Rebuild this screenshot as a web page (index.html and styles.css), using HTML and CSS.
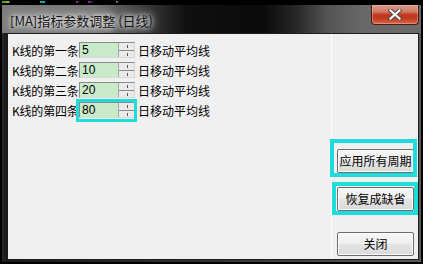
FILE: index.html
```html
<!DOCTYPE html>
<html lang="zh-CN">
<head>
<meta charset="utf-8">
<title>[MA]指标参数调整 (日线)</title>
<link rel="stylesheet" href="styles.css">
</head>
<body>
<div class="desk"></div>
<div class="window">
  <div class="titlebar">
    <span class="title">[MA]指标参数调整 (日线)</span>
    <div class="close">
      <svg width="14" height="11" viewBox="0 0 14 11">
        <path d="M2.5 1.5 L11.5 9.5 M11.5 1.5 L2.5 9.5" stroke="#4a4a4a" stroke-width="4.2" stroke-linecap="square" fill="none"/>
        <path d="M2.5 1.5 L11.5 9.5 M11.5 1.5 L2.5 9.5" stroke="#ffffff" stroke-width="2.2" stroke-linecap="square" fill="none"/>
      </svg>
    </div>
  </div>
  <div class="client">
    <div class="params">
      <div class="row"><span class="lbl">K线的第一条</span><div class="spin"><span class="val">5</span><span class="arrows"><i></i><i></i></span></div><span class="suffix">日移动平均线</span></div>
      <div class="row"><span class="lbl">K线的第二条</span><div class="spin"><span class="val">10</span><span class="arrows"><i></i><i></i></span></div><span class="suffix">日移动平均线</span></div>
      <div class="row"><span class="lbl">K线的第三条</span><div class="spin"><span class="val">20</span><span class="arrows"><i></i><i></i></span></div><span class="suffix">日移动平均线</span></div>
      <div class="row"><span class="lbl">K线的第四条</span><div class="spin"><span class="val">80</span><span class="arrows"><i></i><i></i></span></div><span class="suffix">日移动平均线</span></div>
    </div>
    <div class="actions">
      <button class="btn">应用所有周期</button>
      <button class="btn b2">恢复成缺省</button>
      <button class="btn b3">关闭</button>
    </div>
    <div class="mark m-input"></div>
    <div class="mark m-apply"></div>
    <div class="mark m-reset"></div>
  </div>
</div>
</body>
</html>
```
FILE: styles.css
```css
html, body {
  margin: 0;
  padding: 0;
}
body {
  width: 423px;
  height: 264px;
  overflow: hidden;
  background: #000;
  font-family: "Noto Sans CJK SC", "Liberation Sans", sans-serif;
}
.desk {
  height: 5px;
  background: linear-gradient(to right, #000 0, #000 2px, #4a9a2a 2px, #9ab02a 9px, #000 10px, #000 40px, #2aa0a8 40px, #2aa0a8 45px, #000 45px, #000 76px, #a030a8 76px, #000 80px, #000 88px, #a030a8 88px, #000 94px, #000 116px, #b0a030 116px, #000 119px, #000 100%);
  background-size: 100% 2px;
  background-repeat: no-repeat;
  background-position: 0 1px;
}
.window {
  margin-left: 2px;
  width: 419px;
  height: 257px;
  display: flex;
  flex-direction: column;
  background: linear-gradient(to right, #2a2a2a 0, #1a1a1a 4px, #333 50%, #5a5a5a 100%);
}
.titlebar {
  height: 28px;
  flex: none;
  display: flex;
  align-items: flex-start;
  background: linear-gradient(to right, #7c7c7c 0%, #747474 22%, #3a3a3a 34%, #101010 44%, #0a0a0a 62%, #262626 70%, #555 78%, #686868 86%, #6b6b6b 100%);
}
.title {
  margin-top: 8px;
  padding-left: 8px;
  line-height: 16px;
  font-size: 13px;
  color: #141414;
  white-space: nowrap;
  text-shadow: 0 0 4px #fff, 0 0 8px rgba(255,255,255,0.9), 0 0 14px rgba(255,255,255,0.7);
}
.close {
  margin-left: auto;
  margin-right: 2px;
  width: 48px;
  height: 20px;
  box-sizing: border-box;
  border: 1px solid #4a1c14;
  border-top: none;
  border-radius: 0 0 4px 4px;
  background: linear-gradient(#d99a8c 0%, #d27a66 35%, #c1361e 52%, #c03a22 70%, #d66a48 100%);
  box-shadow: inset 0 0 0 1px rgba(255,210,200,0.35);
  display: flex;
  align-items: center;
  justify-content: center;
}
.close svg {
  display: block;
}
.client {
  flex: 1;
  margin: 0 2px 2px 5px;
  border: 1px solid #1e1e1e;
  background: #f0f0f0;
  display: flex;
  position: relative;
}
.params {
  width: 323px;
  flex: none;
  box-sizing: border-box;
  padding: 8px 0 0 4px;
  display: flex;
  flex-direction: column;
  gap: 4px;
}
.row {
  height: 16px;
  display: flex;
  align-items: center;
  font-size: 12px;
  color: #000;
  white-space: nowrap;
}
.lbl {
  width: 67px;
  flex: none;
  letter-spacing: -0.2px;
}
.spin {
  width: 56px;
  height: 16px;
  flex: none;
  box-sizing: border-box;
  display: flex;
  border: 1px solid;
  border-color: #8c8c8c #d4d4d4 #d8d8d8 #8c8c8c;
}
.val {
  flex: 1;
  background: #c8eac8;
  font-family: "Liberation Sans", sans-serif;
  font-size: 12px;
  line-height: 14px;
  padding-left: 2px;
}
.arrows {
  width: 15px;
  flex: none;
  display: flex;
  flex-direction: column;
  background: #eaeaea;
  border-left: 1px solid #a8a8a8;
}
.arrows i {
  flex: 1;
  position: relative;
}
.arrows i + i {
  border-top: 1px solid #8a8a8a;
}
.arrows i::after {
  content: "";
  position: absolute;
  left: 8px;
  top: 2px;
  width: 1px;
  height: 3px;
  background: #505050;
}
.suffix {
  margin-left: 3px;
}
.actions {
  flex: 1;
  border-left: 1px solid #ffffff;
  box-sizing: border-box;
  padding: 115px 0 0 5px;
  display: flex;
  flex-direction: column;
  align-items: flex-start;
}
.btn {
  width: 77px;
  height: 24px;
  padding: 0;
  margin: 0;
  box-sizing: border-box;
  border: 1px solid #6c6c6c;
  border-radius: 2px;
  background: linear-gradient(#f6f6f6 0%, #efefef 48%, #e4e4e4 52%, #dadada 100%);
  box-shadow: inset 0 0 0 1px #fbfbfb;
  font-family: "Noto Sans CJK SC", sans-serif;
  font-size: 12px;
  color: #000;
  line-height: 20px;
}
.b2 {
  margin-top: 14px;
}
.b3 {
  margin-top: 21px;
}
.mark {
  position: absolute;
  box-sizing: border-box;
  border: 4px solid #1edcdc;
}
.m-input {
  left: 68px;
  top: 65px;
  width: 61px;
  height: 23px;
  border-width: 3px;
}
.m-apply {
  left: 322px;
  top: 105px;
  width: 87px;
  height: 38px;
}
.m-reset {
  left: 324px;
  top: 148px;
  width: 86px;
  height: 33px;
}
```
